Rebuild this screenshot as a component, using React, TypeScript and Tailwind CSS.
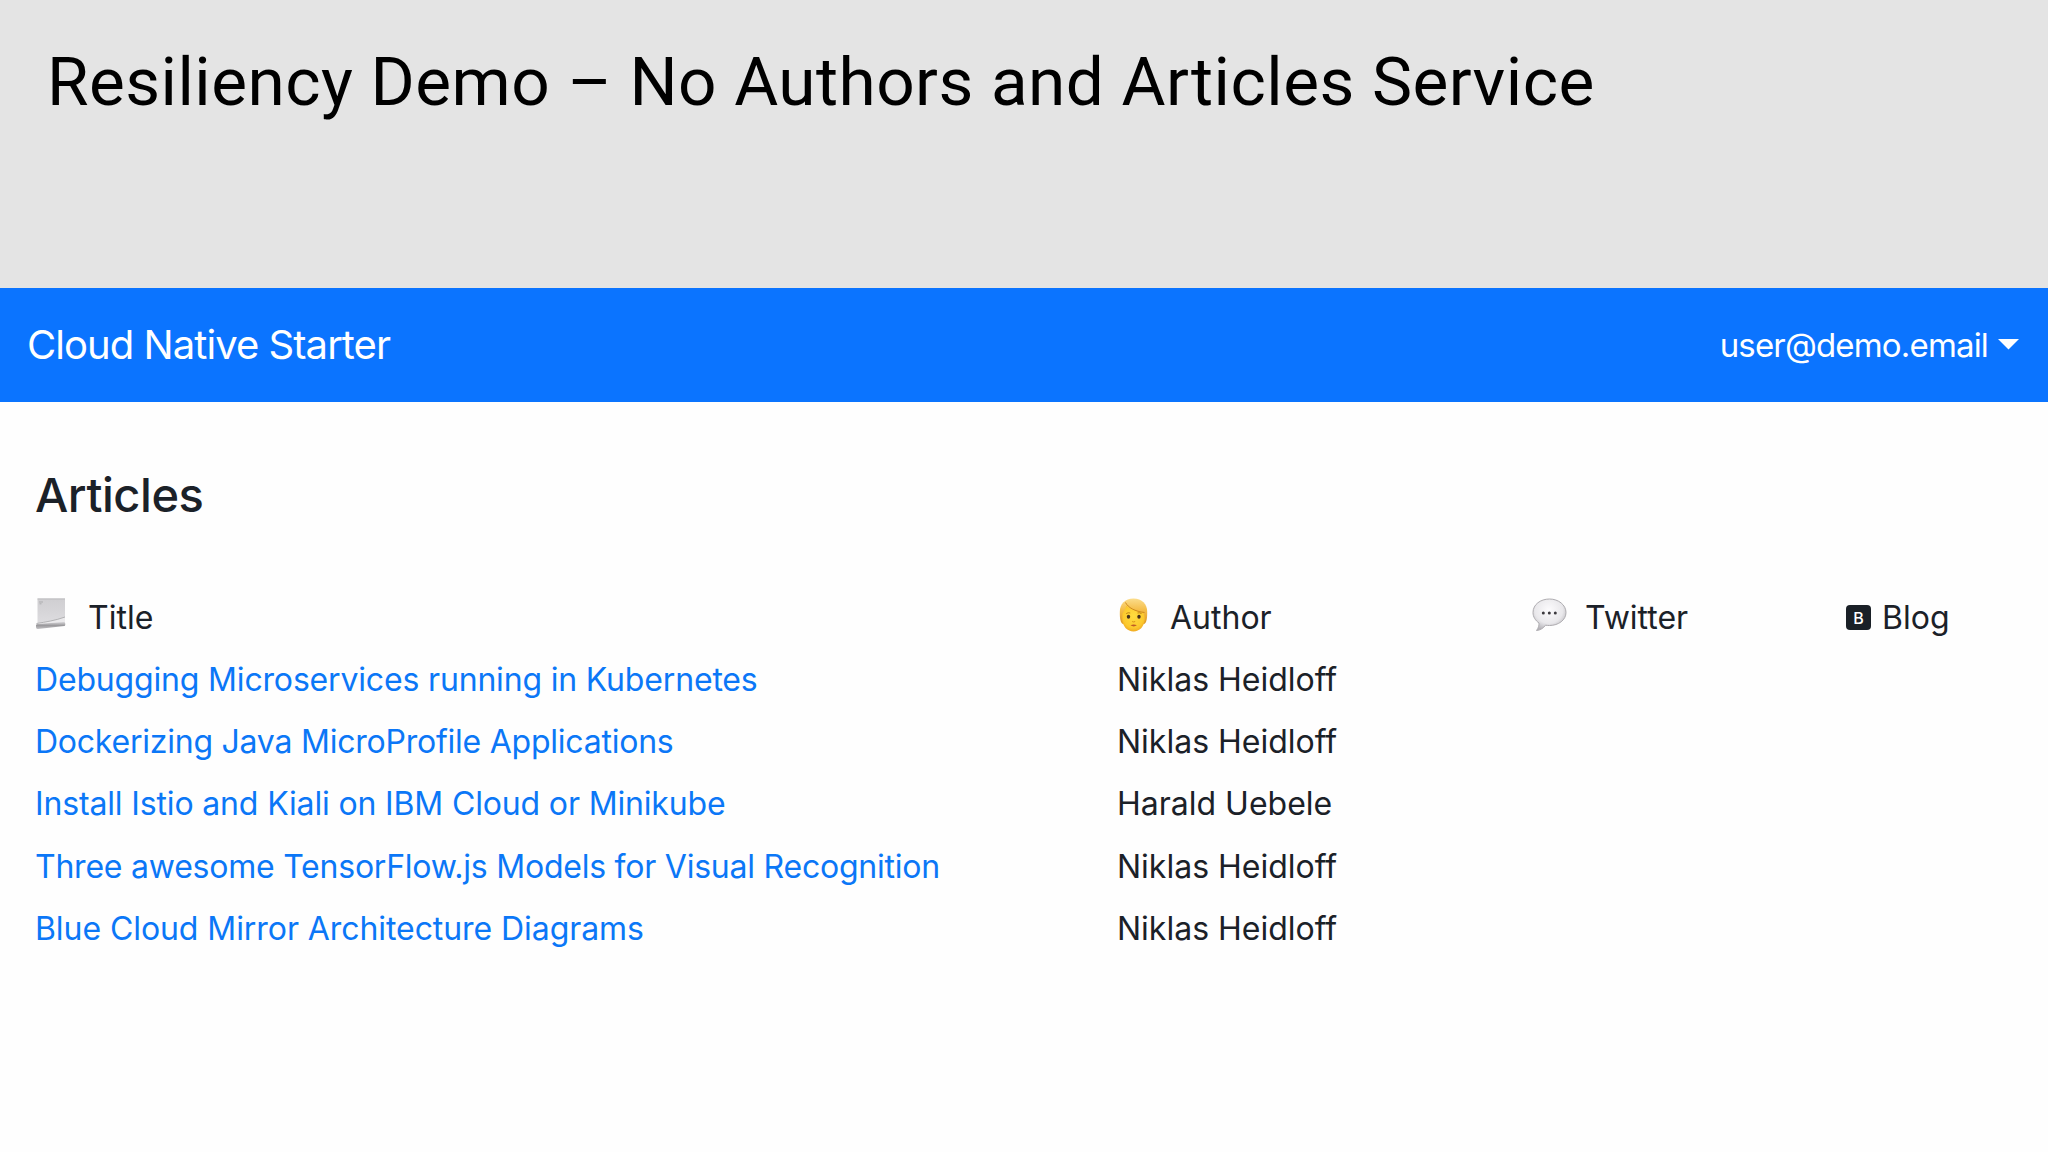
import clsx from 'clsx';

const articles = [
    { title: 'Debugging Microservices running in Kubernetes', author: 'Niklas Heidloff', spacing: 'tracking-[-0.17px]' },
    { title: 'Dockerizing Java MicroProfile Applications', author: 'Niklas Heidloff', spacing: 'tracking-[-0.23px]' },
    { title: 'Install Istio and Kiali on IBM Cloud or Minikube', author: 'Harald Uebele', spacing: 'tracking-[-0.15px]' },
    { title: 'Three awesome TensorFlow.js Models for Visual Recognition', author: 'Niklas Heidloff', spacing: 'tracking-[-0.23px]' },
    { title: 'Blue Cloud Mirror Architecture Diagrams', author: 'Niklas Heidloff', spacing: 'tracking-[-0.07px]' },
];

const rowClass = 'grid h-[62.35px] grid-cols-[1082px_415px_313px_auto] items-center whitespace-nowrap';

function ScrollIcon() {
    return (
        <svg width="33" height="36" viewBox="-0.500 0 33 36" className="mb-[5px] mr-5 shrink-0">
            <defs>
                <linearGradient id="sheet" x1="0" y1="0" x2="0" y2="1">
                    <stop offset="0" stopColor="#cfced1" />
                    <stop offset="1" stopColor="#dedde0" />
                </linearGradient>
                <linearGradient id="roll" x1="0" y1="0" x2="0" y2="1">
                    <stop offset="0" stopColor="#d5d4d7" />
                    <stop offset="0.5" stopColor="#9b9a9d" />
                    <stop offset="1" stopColor="#c4c3c6" />
                </linearGradient>
            </defs>
            <path d="M2 1.500h27.500V26L2 28z" fill="url(#sheet)" />
            <path d="M2 1.500h27.500v1H2z" fill="#bdbcbf" />
            <path d="M3.500 5h4M4 6.800h2" stroke="#a5a4a7" strokeWidth="0.800" />
            <path d="M1 26.500C10 25 20 23.500 29.500 20v6L1 29z" fill="#ebeaec" />
            <path d="M1 26.500C10 25 20 23.500 29.500 20" fill="none" stroke="#acabae" strokeWidth="0.900" />
            <path d="M.5 28.500c0-1.200.5-1.500 2-1.600L28.500 25c1.500 0 1.800 3.600.5 4L2.500 32C.8 32.200.5 31 .5 28.500z" fill="url(#roll)" />
        </svg>
    );
}

function FaceIcon() {
    return (
        <svg width="33" height="36" viewBox="-1 0 33 36" className="mb-[5px] mr-5 shrink-0">
            <defs>
                <linearGradient id="hair" x1="0" y1="0" x2="0" y2="1">
                    <stop offset="0" stopColor="#fbdd8c" />
                    <stop offset="0.450" stopColor="#f5bd48" />
                    <stop offset="1" stopColor="#dc9823" />
                </linearGradient>
                <radialGradient id="skin" cx="0.500" cy="0.400" r="0.650">
                    <stop offset="0" stopColor="#ffdc3f" />
                    <stop offset="0.700" stopColor="#fcc92e" />
                    <stop offset="1" stopColor="#eda01d" />
                </radialGradient>
            </defs>
            <path d="M15.500 1.500C7 1.500 1.800 7 1.800 15c0 5 .2 10.500 3 12h21.400c2.800-1.500 3-7 3-12C29.200 7 24 1.500 15.500 1.500z" fill="url(#hair)" />
            <path d="M4.300 16.500C6 14.500 7.500 12 8.200 8.500c4 4 10 6 15.800 6.800 2 .7 3 3.200 2.800 7.200-.5 7-5.300 12-11.300 12S4.600 29.500 4.200 22.500z" fill="url(#skin)" />
            <path d="M7.500 5.500c2.500 5 9.500 9 19 10" fill="none" stroke="#cf8a1b" strokeWidth="1" />
            <ellipse cx="10.500" cy="19.800" rx="1.700" ry="2" fill="#46301a" />
            <ellipse cx="21" cy="19.800" rx="1.700" ry="2" fill="#46301a" />
            <path d="M8.200 16.600q2-1.400 4-.6M19.500 16q2-.8 4 .6" fill="none" stroke="#b97a12" strokeWidth="0.900" />
            <path d="M14.200 24.500q1.500.9 3 0" fill="none" stroke="#d48a15" strokeWidth="0.900" />
            <path d="M12.500 28.300q3.200-1.500 6.400 0-3.200 2.200-6.400 0z" fill="#c05c26" />
        </svg>
    );
}

function BubbleIcon() {
    return (
        <svg width="36" height="36" viewBox="0 0 36 36" className="mb-[5px] mr-[17px] shrink-0">
            <defs>
                <radialGradient id="bubble" cx="0.480" cy="0.350" r="0.650">
                    <stop offset="0" stopColor="#fcfbfd" />
                    <stop offset="0.650" stopColor="#e9e8eb" />
                    <stop offset="1" stopColor="#b5b3b8" />
                </radialGradient>
            </defs>
            <path
                d="M17.500 2C8.500 2 1 7.500 1 15.500c0 4.500 2.500 8 6 10.500.2 2.500-.6 5-2.500 7.500 4-.3 7-2.500 9-5.300 1.200.3 2.600.3 4 .3C26.500 28.500 34 23 34 15.500S26.500 2 17.500 2z"
                fill="url(#bubble)"
                stroke="#aeacb0"
                strokeWidth="1"
            />
            <circle cx="11.300" cy="16" r="1.500" fill="#3b393d" />
            <circle cx="17.300" cy="16" r="1.500" fill="#3b393d" />
            <circle cx="23.300" cy="16" r="1.500" fill="#3b393d" />
        </svg>
    );
}

function BlogBadge() {
    return (
        <span className="ml-px mr-[11px] flex size-[25px] items-center justify-center rounded-[4px] bg-[#1a2027] text-[16px] font-medium leading-none text-white">
            B
        </span>
    );
}

function App() {
    return (
        <div className="h-[1152px] w-[2048px] overflow-hidden bg-[#fefefe] font-['Inter',sans-serif] text-[#1b2128]">
            <header className="h-[288px] bg-[#e4e4e4] pl-[47px] pt-[42px]">
                <h1 className="whitespace-nowrap font-['Roboto',sans-serif] text-[67.5px] font-normal leading-[80px] tracking-[0.46px] text-black">
                    Resiliency Demo – No Authors and Articles Service
                </h1>
            </header>

            <nav className="flex h-[114px] items-center justify-between bg-[#0b74ff] pl-[27px] pr-[29px] text-white">
                <span className="text-[40px] tracking-[-0.95px]">Cloud Native Starter</span>
                <div className="flex items-center gap-[10px]">
                    <span className="pt-px text-[33px] tracking-[-0.83px]">user@demo.email</span>
                    <svg width="21" height="11" viewBox="0 0 21 11" className="mb-0.5">
                        <path d="M0 0h21L10.500 10.500z" fill="currentColor" />
                    </svg>
                </div>
            </nav>

            <main className="pl-[35px] pt-[63px]">
                <h2 className="text-[47px] font-medium leading-[60px] tracking-[-0.45px]">Articles</h2>

                <div className="mt-[61px] text-[32px]">
                    <div className={rowClass}>
                        <div className="flex items-center pt-px"><ScrollIcon />Title</div>
                        <div className="flex items-center pt-px"><FaceIcon />Author</div>
                        <div className="flex items-center pt-px"><BubbleIcon />Twitter</div>
                        <div className="flex items-center pt-px"><BlogBadge />Blog</div>
                    </div>
                    {articles.map((article) => (
                        <div key={article.title} className={rowClass}>
                            <a href="#" className={clsx('text-[#0b77f7]', article.spacing)}>{article.title}</a>
                            <span>{article.author}</span>
                        </div>
                    ))}
                </div>
            </main>
        </div>
    );
}

export default App;
